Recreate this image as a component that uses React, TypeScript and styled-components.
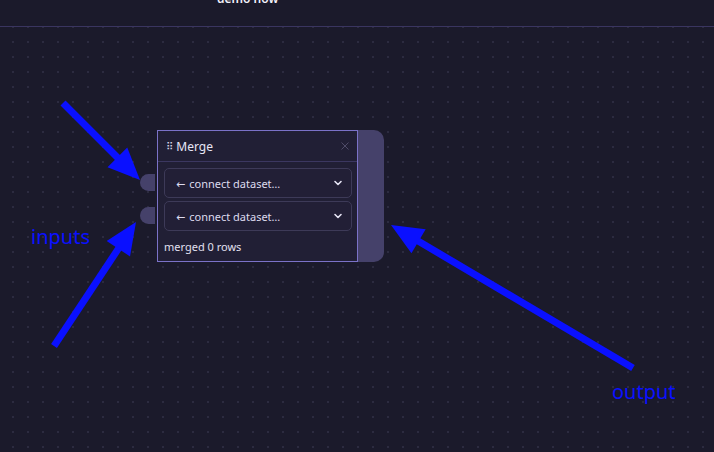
import React from "react";
import styled, { createGlobalStyle } from "styled-components";

const Global = createGlobalStyle`
  html, body { margin: 0; padding: 0; background: #1b1a2b; }
  body { font-family: "Noto Sans", "Open Sans", sans-serif; }
  * { box-sizing: border-box; }
`;

const Page = styled.div`
  width: 714px;
  height: 452px;
  display: flex;
  flex-direction: column;
  background: #1b1a2b;
  overflow: hidden;
  position: relative;
`;

const TopBar = styled.header`
  height: 27px;
  flex: none;
  border-bottom: 1px solid #3a3560;
  display: flex;
  justify-content: flex-start;
  padding-left: 217px;
  overflow: hidden;
`;

const TopTitle = styled.span`
  margin-top: -9px;
  font-size: 12px;
  font-weight: 600;
  color: #f2f1fb;
  line-height: 16px;
`;

const Canvas = styled.main`
  flex: 1;
  position: relative;
  background-image: radial-gradient(circle at 1px 1px, #2c2b40 0.8px, transparent 1.1px);
  background-size: 15px 15px;
  background-position: 12px -1px;
`;

const NodeWrap = styled.div<{ $x: number; $y: number }>`
  position: absolute;
  left: ${(p) => p.$x}px;
  top: ${(p) => p.$y}px;
  display: flex;
  gap: 2px;
`;

const Handles = styled.div`
  display: flex;
  flex-direction: column;
  gap: 16px;
  padding-top: 44px;
`;

const Handle = styled.div`
  width: 15px;
  height: 17px;
  background: #45416a;
  border-radius: 9px 0 0 9px;
`;

const Shell = styled.div`
  width: 227px;
  height: 132px;
  background: #45416a;
  border-radius: 10px;
  display: flex;
`;

const Card = styled.div`
  width: 201px;
  height: 132px;
  background: #211f35;
  border: 1px solid #7b72c8;
  display: flex;
  flex-direction: column;
`;

const CardHeader = styled.div`
  height: 31px;
  flex: none;
  display: flex;
  align-items: center;
  justify-content: space-between;
  padding: 0 7px 0 8px;
  border-bottom: 1px solid #3b3760;
`;

const Title = styled.span`
  font-size: 12px;
  color: #e8e6f6;
  display: flex;
  align-items: center;
  gap: 3px;
`;

const Grip = styled.span`
  font-family: "DejaVu Sans", sans-serif;
  font-size: 10px;
  color: #d6d4e8;
`;

const CardBody = styled.div`
  display: flex;
  flex-direction: column;
  gap: 3px;
  padding: 6px 5px 0 6px;
`;

const Select = styled.div`
  height: 30px;
  border: 1px solid #3d3a58;
  border-radius: 5px;
  background: #221f36;
  display: flex;
  align-items: center;
  justify-content: space-between;
  padding: 0 8px 0 11px;
  font-size: 11px;
  color: #dddbee;
`;

const ArrowGlyph = styled.span`
  font-family: "DejaVu Sans", sans-serif;
  font-size: 11px;
  margin-right: 4px;
`;

const Footer = styled.div`
  padding: 8px 6px 0;
  font-size: 11px;
  color: #e2e0f0;
`;

const Annotations = styled.svg`
  position: absolute;
  left: 0;
  top: 0;
  pointer-events: none;
`;

const Chevron = () => (
  <svg width="10" height="10" viewBox="0 0 10 10">
    <path d="M2 3.5 L5 6.5 L8 3.5" fill="none" stroke="#e6e4f4" strokeWidth="1.6" strokeLinecap="round" strokeLinejoin="round" />
  </svg>
);

const CloseIcon = () => (
  <svg width="10" height="10" viewBox="0 0 10 10">
    <path d="M1.5 1.5 L8.5 8.5 M8.5 1.5 L1.5 8.5" stroke="#4f4b68" strokeWidth="1" />
  </svg>
);

const Arrow = ({ x1, y1, x2, y2 }: { x1: number; y1: number; x2: number; y2: number }) => {
  const ang = Math.atan2(y2 - y1, x2 - x1);
  const len = 32;
  const w = 14;
  const bx = x2 - Math.cos(ang) * len;
  const by = y2 - Math.sin(ang) * len;
  const px = -Math.sin(ang) * w;
  const py = Math.cos(ang) * w;
  return (
    <g fill="#0a10ff" stroke="#0a10ff">
      <line x1={x1} y1={y1} x2={bx + Math.cos(ang) * 4} y2={by + Math.sin(ang) * 4} strokeWidth="7" />
      <polygon points={`${x2},${y2} ${bx + px},${by + py} ${bx - px},${by - py}`} stroke="none" />
    </g>
  );
};

export default function App() {
  return (
    <>
      <Global />
      <Page>
        <TopBar>
          <TopTitle>demo now</TopTitle>
        </TopBar>
        <Canvas>
          <NodeWrap $x={140} $y={103}>
            <Handles>
              <Handle />
              <Handle />
            </Handles>
            <Shell>
              <Card>
                <CardHeader>
                  <Title>
                    <Grip>⠿</Grip>Merge
                  </Title>
                  <CloseIcon />
                </CardHeader>
                <CardBody>
                  <Select>
                    <span><ArrowGlyph>←</ArrowGlyph>connect dataset…</span>
                    <Chevron />
                  </Select>
                  <Select>
                    <span><ArrowGlyph>←</ArrowGlyph>connect dataset…</span>
                    <Chevron />
                  </Select>
                </CardBody>
                <Footer>merged 0 rows</Footer>
              </Card>
            </Shell>
          </NodeWrap>
        </Canvas>
        <Annotations width="714" height="452" viewBox="0 0 714 452">
          <Arrow x1={63} y1={103} x2={140} y2={180} />
          <Arrow x1={54} y1={346} x2={136} y2={222} />
          <Arrow x1={633} y1={368} x2={391} y2={225} />
          <text x="31" y="244" fill="#0a10ff" fontSize="20" fontFamily="Noto Sans, sans-serif">inputs</text>
          <text x="612" y="399" fill="#0a10ff" fontSize="20" fontFamily="Noto Sans, sans-serif">output</text>
        </Annotations>
      </Page>
    </>
  );
}
